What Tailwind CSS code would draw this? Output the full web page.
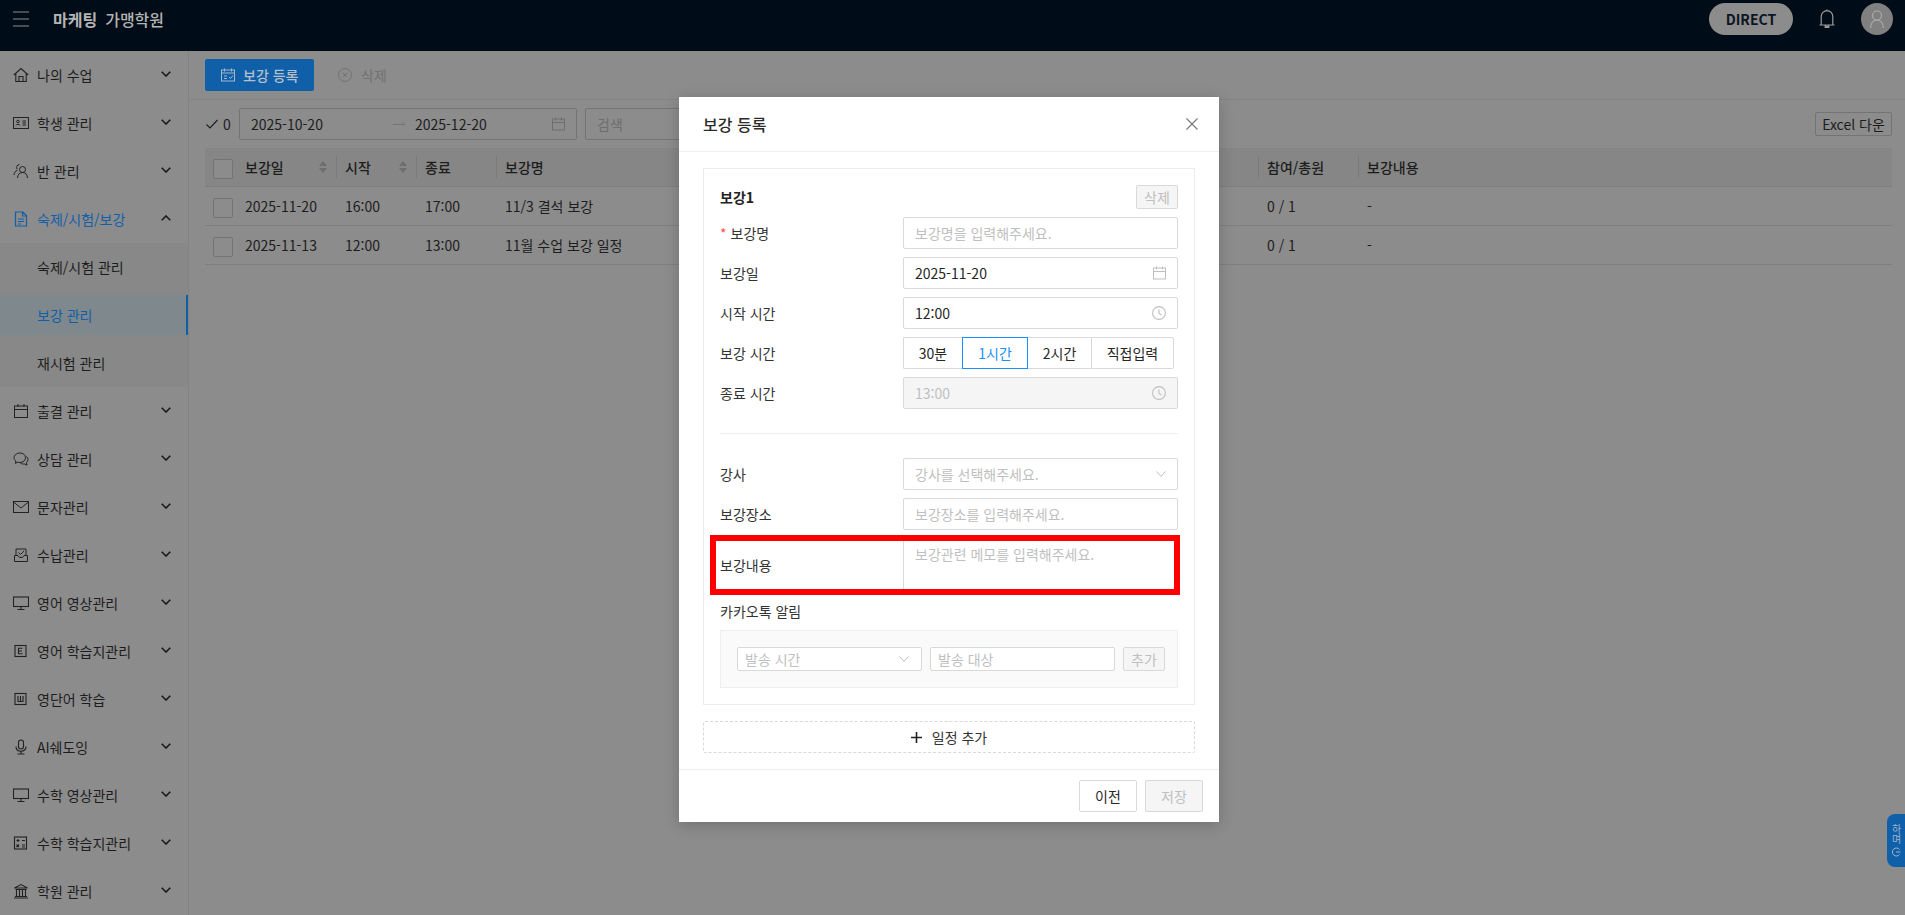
<!doctype html>
<html lang="ko">
<head>
<meta charset="utf-8">
<script src="https://cdn.jsdelivr.net/npm/@tailwindcss/browser@4"></script>
<title>보강 관리</title>
</head>
<body class="font-['Noto_Sans_CJK_KR','Noto_Sans',sans-serif] text-sm text-[#1d1d1d] bg-[#8c8c8c]">
<div class="relative w-[1905px] h-[915px] overflow-hidden flex flex-col">

  <!-- top bar -->
  <header class="h-[51px] shrink-0 bg-[#000c17] flex items-center pb-[13px] text-[#b4b4b4]">
    <svg class="ml-[13px] w-4 h-4" viewBox="0 0 16 16" fill="none" stroke="#8c8c8c" stroke-width="1.2"><path d="M0 1h16M0 8h16M0 15h16"/></svg>
    <span class="ml-6 text-base font-bold leading-6">마케팅</span>
    <span class="ml-2 text-base font-medium leading-6">가맹학원</span>
    <div class="ml-auto flex items-center mr-3">
      <div class="w-[84px] h-8 rounded-full bg-[#8c8c8c] text-[#0c1622] font-bold flex items-center justify-center">DIRECT</div>
      <svg class="ml-[26px] w-4 h-5" viewBox="0 0 16 20" fill="none" stroke="#9a9a9a" stroke-width="1.2"><path d="M8 .5v2M2.200 16V7.500a5.800 5.800 0 0 1 11.600 0V16M.5 16h15M6.200 16.200a1.900 1.900 0 0 0 3.600 0v2.200H6.200z"/></svg>
      <div class="ml-[26px] w-8 h-8 rounded-full bg-[#808080] flex items-center justify-center">
        <svg class="w-5 h-5" viewBox="0 0 20 20" fill="none" stroke="#ababab" stroke-width="1.2"><circle cx="10" cy="6.500" r="4.500"/><path d="M3.500 19c.4-5 2.800-8 6.500-8s6.100 3 6.500 8"/></svg>
      </div>
    </div>
  </header>

  <div class="flex-1 flex min-h-0">
    <!-- sidebar -->
    <aside class="w-[189px] shrink-0 border-r border-[#838383] overflow-hidden">
      <div class="h-12 flex items-center pl-[13px] pr-[17px]">
        <svg class="w-4 h-4 shrink-0" viewBox="0 0 16 16" fill="none" stroke="#222" stroke-width="1.1"><path d="M.8 8 8 1.500 15.200 8M2.800 6.500V14.500H13.200V6.500M6 14.500V9.500H10V14.500"/></svg>
        <span class="ml-2 flex-1">나의 수업</span>
        <svg class="w-[10px] h-[6px] mb-0.5" viewBox="0 0 10 6" fill="none" stroke="#1a1a1a" stroke-width="1.600"><path d="M.7.700 5 5 9.300.700"/></svg>
      </div>
      <div class="h-12 flex items-center pl-[13px] pr-[17px]">
        <svg class="w-4 h-4 shrink-0" viewBox="0 0 16 16" fill="none" stroke="#222" stroke-width="1"><rect x=".5" y="2.500" width="15" height="11"/><circle cx="5" cy="6.500" r="1.300"/><path d="M3 10.500c.3-1.500 3.700-1.500 4 0M9.500 6h3.500M9.500 8h3.500M9.500 10h3.500"/></svg>
        <span class="ml-2 flex-1">학생 관리</span>
        <svg class="w-[10px] h-[6px] mb-0.5" viewBox="0 0 10 6" fill="none" stroke="#1a1a1a" stroke-width="1.600"><path d="M.7.700 5 5 9.300.700"/></svg>
      </div>
      <div class="h-12 flex items-center pl-[13px] pr-[17px]">
        <svg class="w-4 h-4 shrink-0" viewBox="0 0 16 16" fill="none" stroke="#222" stroke-width="1"><circle cx="9.500" cy="6.500" r="3"/><path d="M4.500 15c.3-3.500 2-5.500 5-5.500s4.700 2 5 5.500M6.500 1.500a3 3 0 0 0-2.500 4.500M4.500 7C2.500 8 1 10 1 12"/></svg>
        <span class="ml-2 flex-1">반 관리</span>
        <svg class="w-[10px] h-[6px] mb-0.5" viewBox="0 0 10 6" fill="none" stroke="#1a1a1a" stroke-width="1.600"><path d="M.7.700 5 5 9.300.700"/></svg>
      </div>
      <div class="h-12 flex items-center pl-[13px] pr-[17px] text-[#125fa8]">
        <svg class="w-4 h-4 shrink-0" viewBox="0 0 16 16" fill="none" stroke="#125fa8" stroke-width="1.200"><path d="M2.500 1h7.500l3.500 3.500V15H2.500zM9.500 1v4h4M5 8h6M5 10.500h6M5 13h3"/></svg>
        <span class="ml-2 flex-1">숙제/시험/보강</span>
        <svg class="w-[10px] h-[6px] mb-0.5" viewBox="0 0 10 6" fill="none" stroke="#1a1a1a" stroke-width="1.600"><path d="M.7 5.300 5 1l4.300 4.300"/></svg>
      </div>
      <div class="bg-[#888888]">
        <div class="h-12 flex items-center pl-[37px]">숙제/시험 관리</div>
        <div class="h-12 flex items-center">
          <div class="w-full h-10 flex items-center pl-[37px] bg-[#7e888d] text-[#125fa8] border-r-[2px] border-[#0f5fa9]">보강 관리</div>
        </div>
        <div class="h-12 flex items-center pl-[37px]">재시험 관리</div>
      </div>
      <div class="h-12 flex items-center pl-[13px] pr-[17px]">
        <svg class="w-4 h-4 shrink-0" viewBox="0 0 16 16" fill="none" stroke="#222" stroke-width="1"><rect x="1.500" y="3" width="13" height="11.500"/><path d="M1.500 6.500h13M5 1v3M11 1v3"/></svg>
        <span class="ml-2 flex-1">출결 관리</span>
        <svg class="w-[10px] h-[6px] mb-0.5" viewBox="0 0 10 6" fill="none" stroke="#1a1a1a" stroke-width="1.600"><path d="M.7.700 5 5 9.300.700"/></svg>
      </div>
      <div class="h-12 flex items-center pl-[13px] pr-[17px]">
        <svg class="w-4 h-4 shrink-0" viewBox="0 0 16 16" fill="none" stroke="#222" stroke-width="1"><path d="M7 2c3.200 0 5.500 2 5.500 4.700s-2.300 4.800-5.500 4.800c-.8 0-1.500-.1-2.200-.4L2.500 12.500l.4-2.500C1.800 9.200 1 8 1 6.700 1 4 3.800 2 7 2zM13.500 5.500c1 .9 1.500 1.900 1.500 3 0 1.200-.6 2.200-1.500 3l.5 2.700-2.700-1.300c-1.300.3-2.700 0-3.800-.9"/></svg>
        <span class="ml-2 flex-1">상담 관리</span>
        <svg class="w-[10px] h-[6px] mb-0.5" viewBox="0 0 10 6" fill="none" stroke="#1a1a1a" stroke-width="1.600"><path d="M.7.700 5 5 9.300.700"/></svg>
      </div>
      <div class="h-12 flex items-center pl-[13px] pr-[17px]">
        <svg class="w-4 h-4 shrink-0" viewBox="0 0 16 16" fill="none" stroke="#222" stroke-width="1"><rect x=".5" y="2.500" width="15" height="11"/><path d="m.5 3 7.500 6 7.500-6"/></svg>
        <span class="ml-2 flex-1">문자관리</span>
        <svg class="w-[10px] h-[6px] mb-0.5" viewBox="0 0 10 6" fill="none" stroke="#1a1a1a" stroke-width="1.600"><path d="M.7.700 5 5 9.300.700"/></svg>
      </div>
      <div class="h-12 flex items-center pl-[13px] pr-[17px]">
        <svg class="w-4 h-4 shrink-0" viewBox="0 0 16 16" fill="none" stroke="#222" stroke-width="1"><path d="M3 8V2h10v6M1.500 8.500V14.500h13V8.500H11c-.3 1.500-1.400 2-3 2s-2.700-.5-3-2zM5.500 5.500 7.500 7.500 11 4"/></svg>
        <span class="ml-2 flex-1">수납관리</span>
        <svg class="w-[10px] h-[6px] mb-0.5" viewBox="0 0 10 6" fill="none" stroke="#1a1a1a" stroke-width="1.600"><path d="M.7.700 5 5 9.300.700"/></svg>
      </div>
      <div class="h-12 flex items-center pl-[13px] pr-[17px]">
        <svg class="w-4 h-4 shrink-0" viewBox="0 0 16 16" fill="none" stroke="#222" stroke-width="1.100"><rect x=".5" y="2" width="15" height="9.500"/><path d="M8 11.500v3M4.500 14.500h7"/></svg>
        <span class="ml-2 flex-1">영어 영상관리</span>
        <svg class="w-[10px] h-[6px] mb-0.5" viewBox="0 0 10 6" fill="none" stroke="#1a1a1a" stroke-width="1.600"><path d="M.7.700 5 5 9.300.700"/></svg>
      </div>
      <div class="h-12 flex items-center pl-[13px] pr-[17px]">
        <svg class="w-4 h-4 shrink-0" viewBox="0 0 16 16" fill="none" stroke="#222" stroke-width="1.100"><rect x="2" y="2.500" width="11" height="11"/><path d="M9.500 5.200h-4v5.600h4M5.500 8h3.500"/></svg>
        <span class="ml-2 flex-1">영어 학습지관리</span>
        <svg class="w-[10px] h-[6px] mb-0.5" viewBox="0 0 10 6" fill="none" stroke="#1a1a1a" stroke-width="1.600"><path d="M.7.700 5 5 9.300.700"/></svg>
      </div>
      <div class="h-12 flex items-center pl-[13px] pr-[17px]">
        <svg class="w-4 h-4 shrink-0" viewBox="0 0 16 16" fill="none" stroke="#222" stroke-width="1.100"><rect x="2" y="2.500" width="11" height="11"/><path d="M5 5v5.500h5V5M7.500 5v5.500"/></svg>
        <span class="ml-2 flex-1">영단어 학습</span>
        <svg class="w-[10px] h-[6px] mb-0.5" viewBox="0 0 10 6" fill="none" stroke="#1a1a1a" stroke-width="1.600"><path d="M.7.700 5 5 9.300.700"/></svg>
      </div>
      <div class="h-12 flex items-center pl-[13px] pr-[17px]">
        <svg class="w-4 h-4 shrink-0" viewBox="0 0 16 16" fill="none" stroke="#222" stroke-width="1.100"><rect x="5.500" y="1" width="5" height="9" rx="2.500"/><path d="M3 7.500c0 3 2 4.700 5 4.700s5-1.700 5-4.700M8 12.200v2.800M4.500 15h7"/></svg>
        <span class="ml-2 flex-1">AI쉐도잉</span>
        <svg class="w-[10px] h-[6px] mb-0.5" viewBox="0 0 10 6" fill="none" stroke="#1a1a1a" stroke-width="1.600"><path d="M.7.700 5 5 9.300.700"/></svg>
      </div>
      <div class="h-12 flex items-center pl-[13px] pr-[17px]">
        <svg class="w-4 h-4 shrink-0" viewBox="0 0 16 16" fill="none" stroke="#222" stroke-width="1.100"><rect x=".5" y="2" width="15" height="9.500"/><path d="M8 11.500v3M4.500 14.500h7"/></svg>
        <span class="ml-2 flex-1">수학 영상관리</span>
        <svg class="w-[10px] h-[6px] mb-0.5" viewBox="0 0 10 6" fill="none" stroke="#1a1a1a" stroke-width="1.600"><path d="M.7.700 5 5 9.300.700"/></svg>
      </div>
      <div class="h-12 flex items-center pl-[13px] pr-[17px]">
        <svg class="w-4 h-4 shrink-0" viewBox="0 0 16 16" fill="none" stroke="#222" stroke-width="1.100"><rect x="1.500" y="2" width="12" height="12"/><path d="M3.500 5.500h3M5 4v3M9 5.500h3M3.500 9.500l2.500 2.500M6 9.500 3.500 12M9 10h3M9 12h3"/></svg>
        <span class="ml-2 flex-1">수학 학습지관리</span>
        <svg class="w-[10px] h-[6px] mb-0.5" viewBox="0 0 10 6" fill="none" stroke="#1a1a1a" stroke-width="1.600"><path d="M.7.700 5 5 9.300.700"/></svg>
      </div>
      <div class="h-12 flex items-center pl-[13px] pr-[17px]">
        <svg class="w-4 h-4 shrink-0" viewBox="0 0 16 16" fill="none" stroke="#222" stroke-width="1.100"><path d="M1.500 5 8 1.500 14.500 5zM2.500 6.500h11M3.500 7v6M6.500 7v6M9.500 7v6M12.500 7v6M2 13.500h12M1 15h14"/></svg>
        <span class="ml-2 flex-1">학원 관리</span>
        <svg class="w-[10px] h-[6px] mb-0.5" viewBox="0 0 10 6" fill="none" stroke="#1a1a1a" stroke-width="1.600"><path d="M.7.700 5 5 9.300.700"/></svg>
      </div>
    </aside>

    <!-- main -->
    <main class="flex-1 min-w-0">
      <div class="h-[49px] px-4 flex items-center border-b border-[#838383]">
        <div class="w-[109px] h-8 rounded-[2px] bg-[#0f5fa9] text-[#b4bfca] flex items-center pl-4 font-medium">
          <svg class="w-[14px] h-[14px]" viewBox="0 0 14 14" fill="none" stroke="#a9b8c6" stroke-width="1"><rect x=".5" y="2" width="13" height="11"/><path d="M3.500 .5v3M10.500 .5v3M.5 5h13M3 8h3M3 10.500h3M8 9l1.500 1.500L12 7.500"/></svg>
          <span class="ml-2">보강 등록</span>
        </div>
        <svg class="ml-6 w-[14px] h-[14px]" viewBox="0 0 14 14" fill="none" stroke="#737373" stroke-width="1"><circle cx="7" cy="7" r="6.500"/><path d="m4.800 4.800 4.400 4.400M9.200 4.800 4.800 9.200"/></svg>
        <span class="ml-[9px] text-[#727272]">삭제</span>
      </div>

      <div class="mt-2 h-8 pl-4 pr-[13px] flex items-center">
        <svg class="w-3 h-3 ml-px" viewBox="0 0 12 12" fill="none" stroke="#1d1d1d" stroke-width="1.100"><path d="m.5 6.500 3.500 3.500 7.500-8"/></svg>
        <span class="ml-[5px] w-4">0</span>
        <div class="w-[338px] h-8 border border-[#747474] rounded-[2px] flex items-center pl-[11px] relative">
          <span>2025-10-20</span>
          <svg class="ml-[70px] w-3 h-2" viewBox="0 0 12 8" fill="none" stroke="#747474"><path d="M0 4.500h12M9 2l3 2.500"/></svg>
          <span class="ml-[10px]">2025-12-20</span>
          <svg class="absolute right-[11px] top-[8px] w-[13px] h-[14px]" viewBox="0 0 13 14" fill="none" stroke="#6e6e6e"><rect x=".5" y="2" width="12" height="11"/><path d="M.5 5.500h12M3.500 .5v3M9.500 .5v3"/></svg>
        </div>
        <div class="ml-2 w-[260px] h-8 border border-[#747474] rounded-[2px] flex items-center pl-[11px] text-[#6e6e6e]">검색</div>
        <div class="ml-auto w-[77px] h-[24px] border border-[#747474] rounded-[2px] flex items-center justify-center">Excel 다운</div>
      </div>

      <div class="mt-2 mx-4 mr-[13px]">
        <div class="h-[39px] bg-[#868686] border-b border-[#7f7f7f] flex items-center font-medium">
          <div class="w-8 shrink-0 pl-2"><div class="mt-[3px] w-5 h-5 border border-[#747474] rounded-[2px] bg-[#8c8c8c]"></div></div>
          <div class="w-[100px] shrink-0 pl-2 flex items-center"><span class="flex-1">보강일</span>
            <svg class="w-2 h-3 mr-[9px]" viewBox="0 0 8 12" fill="#6e6e6e"><path d="M4 0 8 5H0zM4 12 0 7h8z"/></svg><span class="w-px h-[22px] bg-[#7a7a7a]"></span></div>
          <div class="w-[80px] shrink-0 pl-2 flex items-center"><span class="flex-1">시작</span>
            <svg class="w-2 h-3 mr-[9px]" viewBox="0 0 8 12" fill="#6e6e6e"><path d="M4 0 8 5H0zM4 12 0 7h8z"/></svg><span class="w-px h-[22px] bg-[#7a7a7a]"></span></div>
          <div class="w-[80px] shrink-0 pl-2 flex items-center"><span class="flex-1">종료</span><span class="w-px h-[22px] bg-[#7a7a7a]"></span></div>
          <div class="w-[762px] shrink-0 pl-2 flex items-center"><span class="flex-1">보강명</span><span class="w-px h-[22px] bg-[#7a7a7a]"></span></div>
          <div class="w-[100px] shrink-0 pl-2 flex items-center"><span class="flex-1">참여/총원</span><span class="w-px h-[22px] bg-[#7a7a7a]"></span></div>
          <div class="pl-2">보강내용</div>
        </div>
        <div class="h-[39px] border-b border-[#7f7f7f] flex items-center">
          <div class="w-8 shrink-0 pl-2"><div class="mt-[3px] w-5 h-5 border border-[#747474] rounded-[2px]"></div></div>
          <div class="w-[100px] shrink-0 pl-2">2025-11-20</div>
          <div class="w-[80px] shrink-0 pl-2">16:00</div>
          <div class="w-[80px] shrink-0 pl-2">17:00</div>
          <div class="w-[762px] shrink-0 pl-2">11/3 결석 보강</div>
          <div class="w-[100px] shrink-0 pl-2">0 / 1</div>
          <div class="pl-2">-</div>
        </div>
        <div class="h-[39px] border-b border-[#7f7f7f] flex items-center">
          <div class="w-8 shrink-0 pl-2"><div class="mt-[3px] w-5 h-5 border border-[#747474] rounded-[2px]"></div></div>
          <div class="w-[100px] shrink-0 pl-2">2025-11-13</div>
          <div class="w-[80px] shrink-0 pl-2">12:00</div>
          <div class="w-[80px] shrink-0 pl-2">13:00</div>
          <div class="w-[762px] shrink-0 pl-2">11월 수업 보강 일정</div>
          <div class="w-[100px] shrink-0 pl-2">0 / 1</div>
          <div class="pl-2">-</div>
        </div>
      </div>
    </main>
  </div>

  <!-- floating tab -->
  <div class="absolute left-[1887px] top-[814px] w-[18px] h-[53px] rounded-l-lg bg-[#0f5fa9] text-[#9fb4c9] flex flex-col items-center pt-[10px] text-[10px] leading-[14px]">
    <span class="[writing-mode:vertical-rl]">하며</span>
    <svg class="mt-[3px] w-[10px] h-[10px]" viewBox="0 0 10 10" fill="none" stroke="#9fb4c9"><path d="M8.500 2.500A4 4 0 1 0 8.500 7.500M9.500 5H5"/></svg>
  </div>

  <!-- modal -->
  <div class="absolute left-[679px] top-[97px] w-[540px] h-[725px] bg-white shadow-[0_3px_14px_rgba(0,0,0,0.2)] flex flex-col text-[#333]">
    <div class="h-[55px] shrink-0 border-b border-[#eeeeee] flex items-center pl-6 pr-[21px] justify-between">
      <span class="text-base font-medium text-[#2b2b2b]">보강 등록</span>
      <svg class="w-3 h-3" viewBox="0 0 12 12" fill="none" stroke="#777" stroke-width="1.100"><path d="m.5.500 11 11M11.500.500l-11 11"/></svg>
    </div>

    <div class="flex-1 px-6 pt-4">
      <div class="h-[537px] border border-[#ececec] px-4 pt-4">
        <div class="h-6 flex items-center justify-between">
          <span class="font-bold text-[#222]">보강1</span>
          <span class="w-[42px] h-6 border border-[#d9d9d9] bg-[#f5f5f5] rounded-[2px] text-[#bfbfbf] flex items-center justify-center">삭제</span>
        </div>
        <div class="mt-2 flex flex-col gap-2">
          <div class="h-8 flex items-center">
            <label class="w-[183px] shrink-0"><span class="text-[#ff4d4f] mr-1">*</span>보강명</label>
            <div class="w-[275px] h-8 border border-[#d9d9d9] rounded-[2px] flex items-center px-[11px] text-[#bfbfbf]">보강명을 입력해주세요.</div>
          </div>
          <div class="h-8 flex items-center">
            <label class="w-[183px] shrink-0">보강일</label>
            <div class="w-[275px] h-8 border border-[#d9d9d9] rounded-[2px] flex items-center justify-between px-[11px] text-[#262626]">2025-11-20
              <svg class="w-[13px] h-[14px]" viewBox="0 0 13 14" fill="none" stroke="#bfbfbf"><rect x=".5" y="2" width="12" height="11"/><path d="M.5 5.500h12M3.500 .5v3M9.500 .5v3"/></svg>
            </div>
          </div>
          <div class="h-8 flex items-center">
            <label class="w-[183px] shrink-0">시작 시간</label>
            <div class="w-[275px] h-8 border border-[#d9d9d9] rounded-[2px] flex items-center justify-between px-[11px] text-[#262626]">12:00
              <svg class="w-[14px] h-[14px]" viewBox="0 0 14 14" fill="none" stroke="#bfbfbf" stroke-width="1.100"><circle cx="7" cy="7" r="6.400"/><path d="M7 3.500V7.500l2.500 1.500"/></svg>
            </div>
          </div>
          <div class="h-8 flex items-center">
            <label class="w-[183px] shrink-0">보강 시간</label>
            <div class="h-8 flex text-[#262626]">
              <span class="w-[59px] border border-[#d9d9d9] border-r-0 rounded-l-[2px] flex items-center justify-center">30분</span>
              <span class="w-[66px] border border-[#1890ff] text-[#1890ff] flex items-center justify-center">1시간</span>
              <span class="w-[63px] border border-[#d9d9d9] border-x-0 flex items-center justify-center">2시간</span>
              <span class="w-[83px] border border-[#d9d9d9] rounded-r-[2px] flex items-center justify-center">직접입력</span>
            </div>
          </div>
          <div class="h-8 flex items-center">
            <label class="w-[183px] shrink-0">종료 시간</label>
            <div class="w-[275px] h-8 border border-[#d9d9d9] bg-[#f5f5f5] rounded-[2px] flex items-center justify-between px-[11px] text-[#bfbfbf]">13:00
              <svg class="w-[14px] h-[14px]" viewBox="0 0 14 14" fill="none" stroke="#bfbfbf" stroke-width="1.100"><circle cx="7" cy="7" r="6.400"/><path d="M7 3.500V7.500l2.500 1.500"/></svg>
            </div>
          </div>
        </div>
        <div class="my-6 h-px bg-[#eeeeee]"></div>
        <div class="flex flex-col gap-2">
          <div class="h-8 flex items-center">
            <label class="w-[183px] shrink-0">강사</label>
            <div class="w-[275px] h-8 border border-[#d9d9d9] rounded-[2px] flex items-center justify-between px-[11px] text-[#bfbfbf]">강사를 선택해주세요.
              <svg class="w-[10px] h-[6px]" viewBox="0 0 10 6" fill="none" stroke="#bfbfbf"><path d="M.4.400 5 5.400 9.600.400"/></svg>
            </div>
          </div>
          <div class="h-8 flex items-center">
            <label class="w-[183px] shrink-0">보강장소</label>
            <div class="w-[275px] h-8 border border-[#d9d9d9] rounded-[2px] flex items-center px-[11px] text-[#bfbfbf]">보강장소를 입력해주세요.</div>
          </div>
          <div class="h-[54px] flex items-center">
            <label class="w-[183px] shrink-0">보강내용</label>
            <div class="w-[275px] h-[54px] border border-[#d9d9d9] rounded-[2px] px-[11px] pt-1 leading-[22px] text-[#bfbfbf]">보강관련 메모를 입력해주세요.</div>
          </div>
        </div>
        <div class="mt-2 leading-[22px]">카카오톡 알림</div>
        <div class="mt-2 h-[58px] border border-[#eeeeee] bg-[#fafafa] pl-4 pt-4 flex gap-2">
          <div class="w-[185px] h-6 border border-[#d9d9d9] bg-white rounded-[2px] flex items-center justify-between pl-[7px] pr-3 text-[#bfbfbf]">발송 시간
            <svg class="w-[10px] h-[6px]" viewBox="0 0 10 6" fill="none" stroke="#bfbfbf"><path d="M.4.400 5 5.400 9.600.400"/></svg>
          </div>
          <div class="w-[185px] h-6 border border-[#d9d9d9] bg-white rounded-[2px] flex items-center pl-[7px] text-[#bfbfbf]">발송 대상</div>
          <div class="w-[42px] h-6 border border-[#d9d9d9] bg-[#f5f5f5] rounded-[2px] flex items-center justify-center text-[#bfbfbf]">추가</div>
        </div>
      </div>
      <div class="mt-4 h-8 border border-dashed border-[#d9d9d9] rounded-[2px] flex items-center justify-center text-[#333]">
        <svg class="w-[11px] h-[11px] mr-[6px]" viewBox="0 0 11 11" fill="none" stroke="#222" stroke-width="1.600"><path d="M5.500 0v11M0 5.500h11"/></svg>
        <span class="ml-1">일정 추가</span>
      </div>
    </div>

    <div class="h-[53px] shrink-0 border-t border-[#eeeeee] flex items-start justify-end gap-2 pt-[10px] pr-4">
      <span class="w-[58px] h-8 border border-[#d9d9d9] rounded-[2px] flex items-center justify-center text-[#262626]">이전</span>
      <span class="w-[58px] h-8 border border-[#d9d9d9] bg-[#f5f5f5] rounded-[2px] flex items-center justify-center text-[#bfbfbf]">저장</span>
    </div>
  </div>

  <!-- red annotation -->
  <div class="absolute left-[710px] top-[535px] w-[470px] h-[60px] border-[6px] border-[#ff0000]"></div>
</div>
</body>
</html>
